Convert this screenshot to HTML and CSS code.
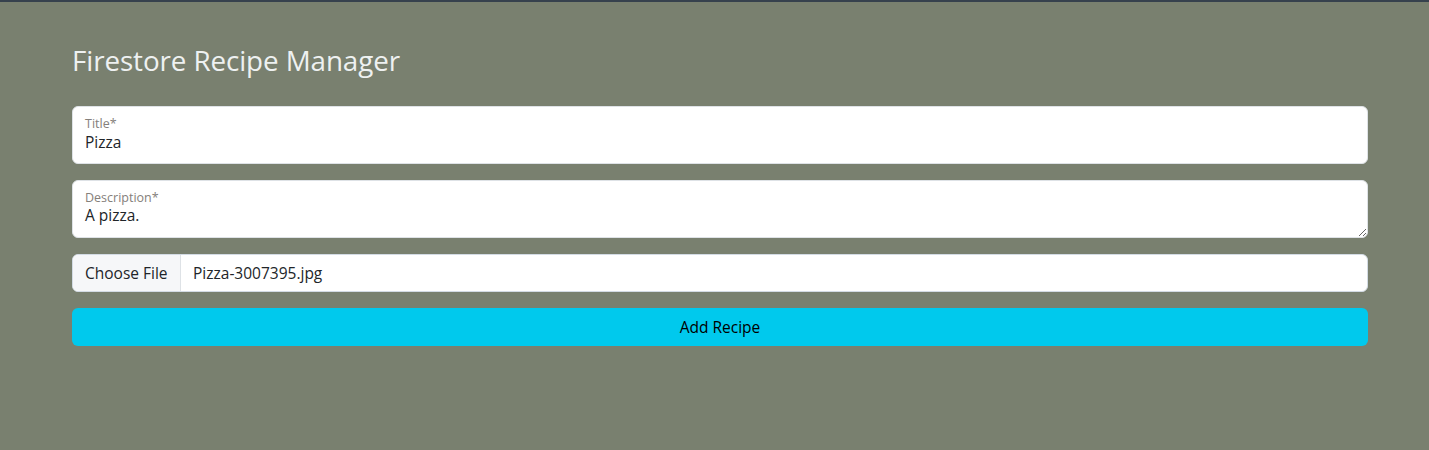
FILE: index.html
```html
<!DOCTYPE html>
<html lang="en">
<head>
<meta charset="utf-8">
<title>Firestore Recipe Manager</title>
<link rel="stylesheet" href="styles.css">
</head>
<body>
<div class="topline"></div>
<main class="container">
  <h3 class="title">Firestore Recipe Manager</h3>
  <form class="form">
    <div class="floating">
      <input class="control" type="text" id="title" value="Pizza">
      <label class="float-label" for="title">Title*</label>
    </div>
    <div class="floating">
      <textarea class="control area" id="desc">A pizza.</textarea>
      <label class="float-label" for="desc">Description*</label>
    </div>
    <div class="file">
      <span class="file-btn">Choose File</span>
      <span class="file-name">Pizza-3007395.jpg</span>
    </div>
    <button type="button" class="submit">Add Recipe</button>
  </form>
</main>
</body>
</html>
```
FILE: styles.css
```css
html, body {
  margin: 0;
  padding: 0;
}
body {
  background: #79806f;
  min-height: 450px;
  font-family: "Open Sans", "Noto Sans", sans-serif;
  color: #212529;
}
.topline {
  height: 2px;
  background: #36414d;
}
.container {
  width: 1296px;
  padding: 36px 0 0 72px;
}
.title {
  margin: 0 0 24px;
  font-size: 27.8px;
  font-weight: 400;
  line-height: 44px;
  color: #eef1f1;
  letter-spacing: -0.1px;
}
.form {
  display: flex;
  flex-direction: column;
  gap: 16px;
}
.floating {
  position: relative;
  height: 58px;
}
.control {
  box-sizing: border-box;
  display: block;
  width: 100%;
  height: 58px;
  margin: 0;
  padding: 23px 12px 10px;
  border: 1px solid #dee2e6;
  border-radius: 6px;
  background: #fff;
  font-family: inherit;
  font-size: 15.5px;
  line-height: 22px;
  color: #212529;
  outline: none;
}
.area {
  resize: vertical;
  min-height: 58px;
  overflow: hidden;
}
.float-label {
  position: absolute;
  left: 13px;
  top: 10px;
  font-size: 12.5px;
  line-height: 16px;
  color: #85807b;
  pointer-events: none;
}
.file {
  display: flex;
  height: 38px;
  box-sizing: border-box;
  border: 1px solid #d3dbe4;
  border-radius: 6px;
  background: #fff;
  overflow: hidden;
  font-size: 15.5px;
  line-height: 36px;
}
.file-btn {
  padding: 0 12px;
  width: 83px;
  background: #f6f7f9;
  border-right: 1px solid #dee2e6;
  color: #212529;
}
.file-name {
  padding-left: 12px;
  color: #212529;
}
.submit {
  height: 38px;
  border: 0;
  border-radius: 6px;
  background: #00c9ed;
  color: #000;
  font-family: inherit;
  font-size: 15.5px;
  padding: 0;
}
```
